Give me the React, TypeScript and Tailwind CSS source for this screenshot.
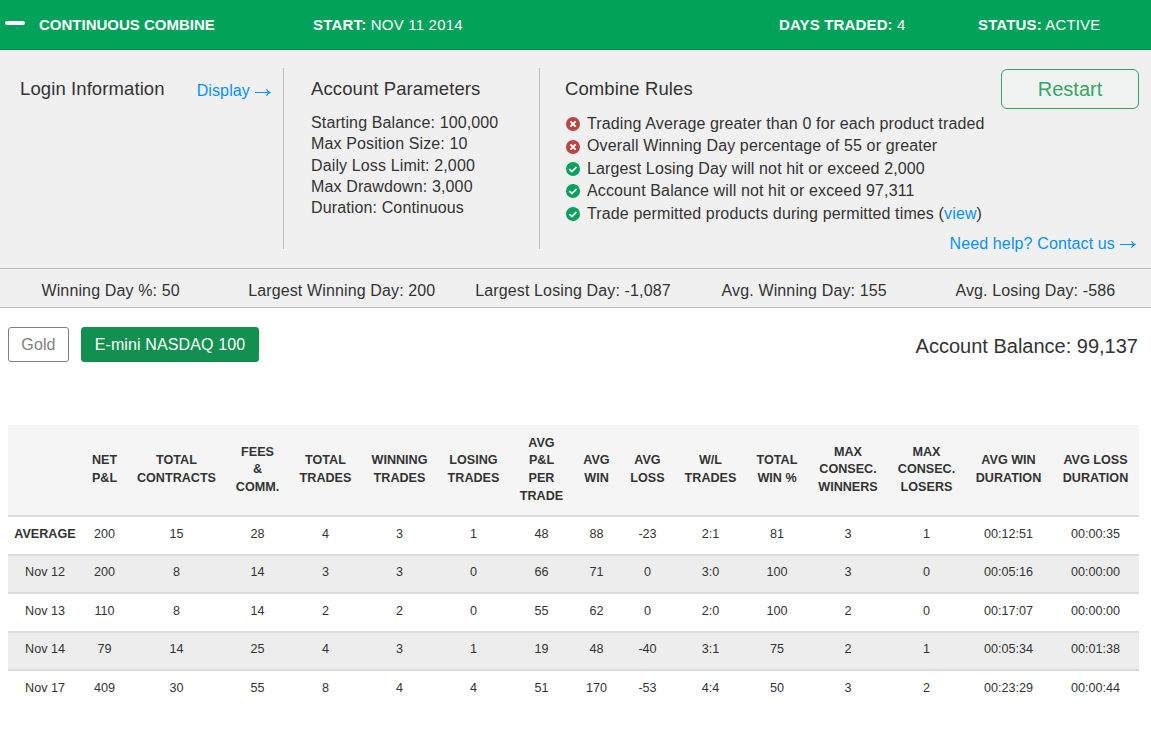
import { useState } from 'react';

interface Column {
  label: string;
  width: string;
}

interface Rule {
  text: string;
  passed: boolean;
  link?: string;
}

const columns: Column[] = [
  { label: '', width: 'w-[74px]' },
  { label: 'NET\nP&L', width: 'w-[45px]' },
  { label: 'TOTAL\nCONTRACTS', width: 'w-[99px]' },
  { label: 'FEES\n&\nCOMM.', width: 'w-[63px]' },
  { label: 'TOTAL\nTRADES', width: 'w-[73px]' },
  { label: 'WINNING\nTRADES', width: 'w-[75px]' },
  { label: 'LOSING\nTRADES', width: 'w-[73px]' },
  { label: 'AVG\nP&L\nPER\nTRADE', width: 'w-[63px]' },
  { label: 'AVG\nWIN', width: 'w-[47px]' },
  { label: 'AVG\nLOSS', width: 'w-[55px]' },
  { label: 'W/L\nTRADES', width: 'w-[71px]' },
  { label: 'TOTAL\nWIN %', width: 'w-[62px]' },
  { label: 'MAX\nCONSEC.\nWINNERS', width: 'w-[80px]' },
  { label: 'MAX\nCONSEC.\nLOSERS', width: 'w-[77px]' },
  { label: 'AVG WIN\nDURATION', width: 'w-[87px]' },
  { label: 'AVG LOSS\nDURATION', width: 'w-[87px]' },
];

const rows: string[][] = [
  ['AVERAGE', '200', '15', '28', '4', '3', '1', '48', '88', '-23', '2:1', '81', '3', '1', '00:12:51', '00:00:35'],
  ['Nov 12', '200', '8', '14', '3', '3', '0', '66', '71', '0', '3:0', '100', '3', '0', '00:05:16', '00:00:00'],
  ['Nov 13', '110', '8', '14', '2', '2', '0', '55', '62', '0', '2:0', '100', '2', '0', '00:17:07', '00:00:00'],
  ['Nov 14', '79', '14', '25', '4', '3', '1', '19', '48', '-40', '3:1', '75', '2', '1', '00:05:34', '00:01:38'],
  ['Nov 17', '409', '30', '55', '8', '4', '4', '51', '170', '-53', '4:4', '50', '3', '2', '00:23:29', '00:00:44'],
];

const parameters = [
  'Starting Balance: 100,000',
  'Max Position Size: 10',
  'Daily Loss Limit: 2,000',
  'Max Drawdown: 3,000',
  'Duration: Continuous',
];

const rules: Rule[] = [
  { text: 'Trading Average greater than 0 for each product traded', passed: false },
  { text: 'Overall Winning Day percentage of 55 or greater', passed: false },
  { text: 'Largest Losing Day will not hit or exceed 2,000', passed: true },
  { text: 'Account Balance will not hit or exceed 97,311', passed: true },
  { text: 'Trade permitted products during permitted times', passed: true, link: 'view' },
];

const stats = [
  'Winning Day %: 50',
  'Largest Winning Day: 200',
  'Largest Losing Day: -1,087',
  'Avg. Winning Day: 155',
  'Avg. Losing Day: -586',
];

const products = ['Gold', 'E-mini NASDAQ 100'];

function RuleIcon({ passed }: { passed: boolean }) {
  return (
    <svg viewBox="0 0 14 14" className="h-3.5 w-3.5 shrink-0">
      <circle cx="7" cy="7" r="7" fill={passed ? '#03a25b' : '#b94645'} />
      {passed ? (
        <path d="M3.3 7.1l2.6 2.5 4.7-4.7" fill="none" stroke="#fff" strokeWidth="1.8" />
      ) : (
        <path d="M4.4 4.4l5.2 5.2M9.6 4.4l-5.2 5.2" fill="none" stroke="#fff" strokeWidth="1.9" />
      )}
    </svg>
  );
}

function Arrow() {
  return (
    <svg viewBox="0 0 16 8" className="ml-[5px] inline-block h-2 w-4" fill="none" stroke="currentColor">
      <path d="M0 4.5h15M11.5 1.2c.7 1.6 1.8 2.7 3.5 3.3-1.7.6-2.8 1.7-3.5 3.3" strokeWidth="1.1" />
    </svg>
  );
}

export default function App() {
  const [product, setProduct] = useState('E-mini NASDAQ 100');

  return (
    <div className="min-h-screen bg-white font-['Liberation_Sans',Arial,sans-serif] text-base tracking-[0.13px] text-[#333]">
      <header className="flex h-[50px] items-center border-b border-[#0b9150] bg-[#03a25b] pl-[5px] text-[15px] text-white">
        <span className="mb-[3px] h-1 w-5 rounded-full bg-white" />
        <h1 className="ml-3.5 w-[274px] pt-px font-bold tracking-normal">CONTINUOUS COMBINE</h1>
        <p className="w-[466px] pt-px tracking-[0.2px]"><b>START:</b> NOV 11 2014</p>
        <p className="w-[199px] pt-px tracking-[0.15px]"><b>DAYS TRADED:</b> 4</p>
        <p className="pt-px tracking-[0.15px]"><b>STATUS:</b> ACTIVE</p>
      </header>

      <section className="flex h-[218px] bg-[#f0f0f0] pt-[18px]">
        <div className="flex h-[181px] w-[284px] items-start justify-between border-r border-[#bbb] pr-3 pl-5">
          <h2 className="pt-1.5 text-[18.5px] leading-[29px] tracking-[0.1px]">Login Information</h2>
          <a href="#" className="pt-[11px] leading-6 text-[#0593fa]">Display<Arrow /></a>
        </div>
        <div className="h-[181px] w-64 border-r border-[#bbb] pl-[27px]">
          <h2 className="pt-1.5 text-[18.5px] leading-[29px] tracking-[0.1px]">Account Parameters</h2>
          <ul className="mt-[9px] leading-[21.3px]">
            {parameters.map((item) => (
              <li key={item}>{item}</li>
            ))}
          </ul>
        </div>
        <div className="flex flex-1 flex-col pr-3 pl-[25px]">
          <div className="flex items-start justify-between">
            <h2 className="pt-1.5 text-[18.5px] leading-[29px] tracking-[0.1px]">Combine Rules</h2>
            <button className="mt-px h-10 w-[138px] rounded-md border border-[#35a566] bg-[#f1f3f2] text-xl tracking-normal text-[#35a566]">
              Restart
            </button>
          </div>
          <ul className="mt-1 leading-[22.4px]">
            {rules.map((rule) => (
              <li key={rule.text} className="flex items-center gap-[7px] pl-px">
                <RuleIcon passed={rule.passed} />
                <span>
                  {rule.text}
                  {rule.link && <> (<a href="#" className="text-[#0593fa]">{rule.link}</a>)</>}
                </span>
              </li>
            ))}
          </ul>
          <a href="#" className="mt-[6.5px] mr-[3px] self-end text-[#0593fa]">Need help? Contact us<Arrow /></a>
        </div>
      </section>

      <section className="h-10 overflow-hidden border-y border-[#bbb] bg-[#f0f0f0]">
        <div className="-ml-[5px] grid h-full w-[1156px] grid-cols-5 items-center pt-1.5 text-center">
          {stats.map((stat) => (
            <span key={stat}>{stat}</span>
          ))}
        </div>
      </section>

      <section className="flex h-[117px] items-start justify-between pt-[19px] pr-3 pl-2">
        <div className="flex gap-3">
          {products.map((name) => (
            <button
              key={name}
              onClick={() => setProduct(name)}
              className={`h-[35px] rounded-[3px] border ${
                name === product
                  ? 'w-[178px] border-[#11904f] bg-[#11904f] text-white'
                  : 'w-[61px] border-[#808080] bg-white text-[#808080]'
              }`}
            >
              {name}
            </button>
          ))}
        </div>
        <p className="pt-[5px] pr-px text-xl tracking-normal">Account Balance: 99,137</p>
      </section>

      <table className="ml-2 w-[1131px] table-fixed border-separate border-spacing-0 text-center text-[12.6px] tracking-normal">
        <thead>
          <tr className="h-[90px] bg-[#f5f5f5]">
            {columns.map((column, i) => (
              <th key={i} className={`${column.width} p-0 align-middle leading-[17.6px] font-bold whitespace-pre`}>
                {column.label}
              </th>
            ))}
          </tr>
        </thead>
        <tbody>
          {rows.map((row, r) => (
            <tr key={row[0]} className={r % 2 ? 'h-[38px] bg-[#ededed]' : 'h-[39px] bg-white'}>
              {row.map((cell, c) => (
                <td
                  key={c}
                  className={`border-t-2 border-[#dcdcdc] p-0 leading-[18px] ${r % 2 ? 'pb-1' : 'pb-[3px]'} ${
                    r === 0 && c === 0 ? 'font-bold' : ''
                  }`}
                >
                  {cell}
                </td>
              ))}
            </tr>
          ))}
        </tbody>
      </table>
    </div>
  );
}
